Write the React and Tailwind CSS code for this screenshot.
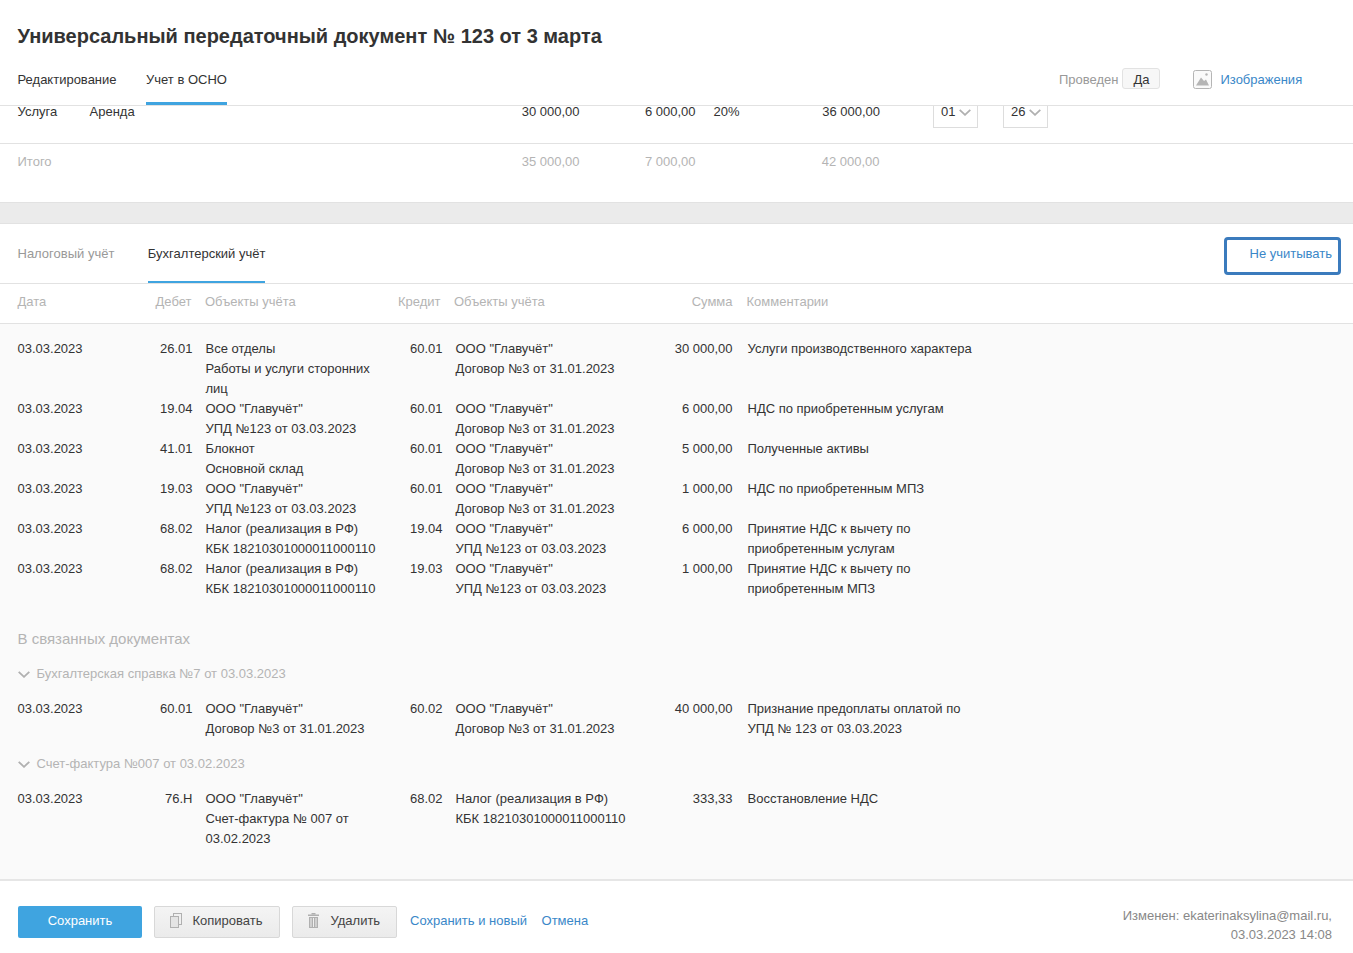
const FONT = "font-['Liberation_Sans',Arial,sans-serif]";

const ROWS = [
  ["03.03.2023", "26.01", ["Все отделы", "Работы и услуги сторонних", "лиц"], "60.01", ["ООО \"Главучёт\"", "Договор №3 от 31.01.2023"], "30 000,00", ["Услуги производственного характера"]],
  ["03.03.2023", "19.04", ["ООО \"Главучёт\"", "УПД №123 от 03.03.2023"], "60.01", ["ООО \"Главучёт\"", "Договор №3 от 31.01.2023"], "6 000,00", ["НДС по приобретенным услугам"]],
  ["03.03.2023", "41.01", ["Блокнот", "Основной склад"], "60.01", ["ООО \"Главучёт\"", "Договор №3 от 31.01.2023"], "5 000,00", ["Полученные активы"]],
  ["03.03.2023", "19.03", ["ООО \"Главучёт\"", "УПД №123 от 03.03.2023"], "60.01", ["ООО \"Главучёт\"", "Договор №3 от 31.01.2023"], "1 000,00", ["НДС по приобретенным МПЗ"]],
  ["03.03.2023", "68.02", ["Налог (реализация в РФ)", "КБК 18210301000011000110"], "19.04", ["ООО \"Главучёт\"", "УПД №123 от 03.03.2023"], "6 000,00", ["Принятие НДС к вычету по", "приобретенным услугам"]],
  ["03.03.2023", "68.02", ["Налог (реализация в РФ)", "КБК 18210301000011000110"], "19.03", ["ООО \"Главучёт\"", "УПД №123 от 03.03.2023"], "1 000,00", ["Принятие НДС к вычету по", "приобретенным МПЗ"]],
];

const SPRAVKA = ["03.03.2023", "60.01", ["ООО \"Главучёт\"", "Договор №3 от 31.01.2023"], "60.02", ["ООО \"Главучёт\"", "Договор №3 от 31.01.2023"], "40 000,00", ["Признание предоплаты оплатой по", "УПД № 123 от 03.03.2023"]];
const INVOICE = ["03.03.2023", "76.Н", ["ООО \"Главучёт\"", "Счет-фактура № 007 от", "03.02.2023"], "68.02", ["Налог (реализация в РФ)", "КБК 18210301000011000110"], "333,33", ["Восстановление НДС"]];

const GRID = "grid grid-cols-[135px_40px_175px_75px_193px_97px_1fr]";

function Chevron({ className }) {
  return (
    <svg className={className} width="12" height="7" viewBox="0 0 12 7" fill="none" stroke="#b0b0b0" strokeWidth="1.8">
      <path d="M0.7 0.8 L6 5.8 L11.3 0.8" />
    </svg>
  );
}

function Lines({ items, className }) {
  return (
    <div className={className}>
      {items.map((t, i) => (
        <div key={i} className="whitespace-nowrap">{t}</div>
      ))}
    </div>
  );
}

function EntryRow({ row }) {
  const [date, debit, debitObj, credit, creditObj, sum, note] = row;
  return (
    <div className={`${GRID} pl-[17.5px] text-[13px] leading-5 text-[#333]`}>
      <div>{date}</div>
      <div className="text-right">{debit}</div>
      <Lines items={debitObj} className="pl-[13px]" />
      <div className="text-right">{credit}</div>
      <Lines items={creditObj} className="pl-[13px]" />
      <div className="text-right">{sum}</div>
      <Lines items={note} className="pl-[15px]" />
    </div>
  );
}

function DocTitle({ children }) {
  return (
    <div className="flex items-center gap-[6.5px] pl-[18px] text-[13px] leading-5 text-[#b4b4b4]">
      <Chevron />
      <span>{children}</span>
    </div>
  );
}

function MiniSelect({ value, className }) {
  return (
    <div className={`flex h-[27px] w-[45px] items-start gap-[4px] border border-[#ddd] pl-[7px] text-[13px] leading-5 text-[#333] ${className}`}>
      <span>{value}</span>
      <Chevron className="mt-[7px]" />
    </div>
  );
}

function GreyButton({ icon, label, className }) {
  return (
    <button className={`flex h-8 items-center rounded-[2px] border border-[#d8d8d8] bg-gradient-to-b from-[#f4f4f4] to-[#ebebeb] pb-[3px] text-[13px] text-[#444] ${className}`}>
      {icon}
      <span>{label}</span>
    </button>
  );
}

export default function App() {
  return (
    <div className={`${FONT} h-[953px] w-[1353px] overflow-hidden bg-white`}>
      <header className="h-[106px] border-b border-[#e2e2e2] pl-[17.5px] pr-[17px]">
        <h1 className="pt-[23px] text-xl font-bold leading-[26px] text-[#333]">
          Универсальный передаточный документ № 123 от 3 марта
        </h1>
        <div className="mt-[9px] flex items-start">
          <div className="pt-[12px] text-[13px] leading-5 text-[#333]">Редактирование</div>
          <div className="ml-[29.5px] h-[47px] border-b-[3px] border-[#3fa4e0] pt-[12px] text-[13px] leading-5 text-[#333]">Учет в ОСНО</div>
          <div className="ml-[832px] mt-[10px] flex items-center">
            <span className="pt-[1px] text-[13px] text-[#999]">Проведен</span>
            <span className="ml-[4px] flex h-[21px] w-[38px] items-center justify-center rounded-[3px] border border-[#e2e2e2] bg-[#f7f7f7] pt-[1px] text-[13px] text-[#333]">Да</span>
            <svg className="ml-[33px] mt-[2px]" width="19" height="19" viewBox="0 0 19 19" fill="none">
              <rect x="0.5" y="0.5" width="18" height="18" rx="2" fill="#fafafa" stroke="#b5b5b5" />
              <path d="M3 15.5 L8 7.5 L11 11 L13 9.5 L16 15.5 Z" fill="#b5b5b5" />
              <circle cx="13.5" cy="4.5" r="1.2" fill="#b5b5b5" />
            </svg>
            <span className="ml-[8px] mt-[2px] text-[13px] text-[#3a87c8]">Изображения</span>
          </div>
        </div>
      </header>

      <div className="h-[38px] overflow-hidden border-b border-[#e2e2e2]">
        <div className="-mt-[4px] flex items-start pl-[17.5px] text-[13px] leading-5 text-[#333]">
          <span className="w-[72px]">Услуга</span>
          <span className="w-[100px]">Аренда</span>
          <span className="w-[390px] text-right">30 000,00</span>
          <span className="w-[116px] text-right">6 000,00</span>
          <span className="ml-[18px] w-[30px]">20%</span>
          <span className="ml-[56.5px] w-[80px] text-right">36 000,00</span>
          <MiniSelect value="01" className="-mt-[1px] ml-[53px]" />
          <MiniSelect value="26" className="-mt-[1px] ml-[25px]" />
        </div>
      </div>

      <div className="h-[58px] pt-[8px]">
        <div className="flex pl-[17.5px] text-[13px] leading-5 text-[#b4b4b4]">
          <span className="w-[172px]">Итого</span>
          <span className="w-[390px] text-right">35 000,00</span>
          <span className="w-[116px] text-right">7 000,00</span>
          <span className="ml-[104px] w-[80px] text-right">42 000,00</span>
        </div>
      </div>

      <div className="h-[22px] border-y border-[#e2e2e2] bg-[#ebebeb]" />

      <div className="flex h-[60px] items-start border-b border-[#e2e2e2] pl-[17.5px]">
        <div className="pt-[20px] text-[13px] leading-5 text-[#999]">Налоговый учёт</div>
        <div className="ml-[33.5px] h-[59px] border-b-2 border-[#3fa4e0] pt-[20px] text-[13px] leading-5 text-[#333]">Бухгалтерский учёт</div>
        <button className="ml-auto mr-[12px] mt-[13px] h-[38px] w-[117px] rounded-[4px] border-[3px] border-[#3b7bbd] pb-[5px] pr-[6px] text-right text-[13px] leading-5 text-[#3a87c8]">
          Не учитывать
        </button>
      </div>

      <div className={`${GRID} h-[40px] items-center border-b border-[#e2e2e2] pb-[3px] pl-[17.5px] text-[13px] leading-5 text-[#b4b4b4]`}>
        <div>Дата</div>
        <div className="-ml-[4px] mr-[1px] whitespace-nowrap text-right">Дебет</div>
        <div className="pl-[12.5px]">Объекты учёта</div>
        <div className="pr-[2px] text-right">Кредит</div>
        <div className="pl-[11.5px]">Объекты учёта</div>
        <div className="text-right">Сумма</div>
        <div className="pl-[14px]">Комментарии</div>
      </div>

      <main className="h-[557px] border-b-2 border-[#e6e6e6] bg-[#fafafa] pt-[15px]">
        {ROWS.map((row, i) => (
          <EntryRow key={i} row={row} />
        ))}
        <div className="mt-[30px] pl-[17.5px] text-[15px] leading-5 text-[#b4b4b4]">В связанных документах</div>
        <div className="mt-[15px]"><DocTitle>Бухгалтерская справка №7 от 03.03.2023</DocTitle></div>
        <div className="mt-[15px]"><EntryRow row={SPRAVKA} /></div>
        <div className="mt-[15px]"><DocTitle>Счет-фактура №007 от 03.02.2023</DocTitle></div>
        <div className="mt-[15px]"><EntryRow row={INVOICE} /></div>
      </main>

      <footer className="flex items-start pl-[18px] pt-[25px]">
        <button className="h-8 w-[124px] rounded-[2px] bg-[#3fa4e0] pb-[3px] text-[13px] text-white">Сохранить</button>
        <GreyButton
          className="ml-[12px] w-[126px] pl-[15px]"
          label="Копировать"
          icon={
            <svg className="mr-[10.5px]" width="12" height="15" viewBox="0 0 12 15" fill="none" stroke="#b0b0b0">
              <rect x="3.5" y="0.5" width="8" height="11" fill="#f0f0f0" />
              <rect x="0.5" y="3.5" width="8" height="11" fill="#e4e4e4" />
            </svg>
          }
        />
        <GreyButton
          className="ml-[12px] w-[105px] pl-[15px]"
          label="Удалить"
          icon={
            <svg className="mr-[11.5px]" width="11" height="15" viewBox="0 0 11 15" fill="#b0b0b0">
              <rect x="0" y="1.5" width="11" height="1.5" />
              <rect x="3.5" y="0" width="4" height="1.5" />
              <path d="M1 4h9v11H1z M2.5 5v9h1V5z M5 5v9h1V5z M7.5 5v9h1V5z" fillRule="evenodd" />
            </svg>
          }
        />
        <span className="ml-[13px] mt-[5px] text-[13px] leading-5 text-[#3a87c8]">Сохранить и новый</span>
        <span className="ml-[14.5px] mt-[5px] text-[13px] leading-5 text-[#3a87c8]">Отмена</span>
        <div className="ml-auto mr-[21px] text-right text-[13px] leading-[19px] text-[#888]">
          <div>Изменен: ekaterinaksylina@mail.ru,</div>
          <div>03.03.2023 14:08</div>
        </div>
      </footer>
    </div>
  );
}
